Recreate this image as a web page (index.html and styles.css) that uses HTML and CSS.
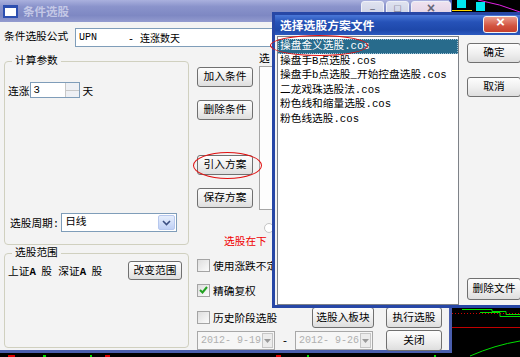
FILE: index.html
```html
<!DOCTYPE html>
<html lang="zh-CN">
<head>
  <meta charset="UTF-8">
  <title>条件选股</title>
  <link rel="stylesheet" href="styles.css">
</head>
<body>

  <div class="desktop">

    <!-- chart of the main program behind the dialogs -->
    <svg class="chart" width="520" height="357" viewBox="0 0 520 357">
      <rect x="0" y="0" width="520" height="357" fill="#000"/>
      <line x1="452" y1="10.5" x2="472" y2="10.5" stroke="#ffd800" stroke-width="1"/>
      <rect x="457" y="0" width="9" height="8" fill="#00e8f0"/>
      <rect x="476" y="2" width="9" height="9" fill="#00e8f0"/>
      <path d="M478 0 Q 500 4 520 12" stroke="#e020e0" fill="none" stroke-width="1"/>
      <line x1="452" y1="307.5" x2="488" y2="307.5" stroke="#d00000"/>
      <path d="M462 309.5 H492 V311.5 H506 V314.5 H520" stroke="#00e000" fill="none"/>
      <path d="M480 312.5 H500 V316.5 H520" stroke="#00e000" fill="none"/>
      <line x1="452" y1="313.5" x2="520" y2="313.5" stroke="#d00000" stroke-dasharray="1 2"/>
      <line x1="452" y1="327.5" x2="520" y2="327.5" stroke="#c00000"/>
      <path d="M470 356 Q 495 345 520 341" stroke="#00e000" fill="none"/>
      <rect x="8" y="355" width="7" height="2" fill="#e00000"/>
      <rect x="43" y="355" width="3" height="2" fill="#00e000"/>
      <rect x="90" y="355" width="2" height="2" fill="#00e000"/>
      <rect x="105" y="355" width="5" height="2" fill="#e00000"/>
      <rect x="276" y="355" width="5" height="2" fill="#e00000"/>
      <rect x="307" y="355" width="2" height="2" fill="#00e000"/>
      <rect x="434" y="355" width="2" height="2" fill="#00e000"/>
    </svg>

    <!-- main dialog -->
    <div class="win main-win">
      <div class="titlebar inactive">
        <span class="win-icon"></span>
        <span class="title">条件选股</span>
        <div class="caption-btns">
          <span class="cb">&#8211;</span>
          <span class="cb">&#9633;</span>
          <span class="cb cb-close">&#215;</span>
        </div>
      </div>

      <div class="main-body">
        <div class="formula-row">
          <span class="formula-label">条件选股公式</span>
          <div class="textbox formula">
            <span class="code">UPN</span><span class="code-desc">- 连涨数天</span>
          </div>
        </div>

        <div class="columns">
          <div class="left-col">
            <fieldset class="group calc">
              <legend>计算参数</legend>
              <div class="spin-row">
                连涨
                <div class="spin">
                  <span class="spin-val">3</span>
                  <span class="spin-btns"><i class="up"></i><i class="down"></i></span>
                </div>
                天
              </div>
              <div class="period-row">
                <span>选股周期:</span>
                <div class="combo">
                  <span class="combo-val">日线</span>
                  <span class="combo-btn">
                    <svg width="9" height="6" viewBox="0 0 9 6"><path d="M1 1 L4.5 4.5 L8 1" stroke="#3b4f82" stroke-width="1.6" fill="none"/></svg>
                  </span>
                </div>
              </div>
            </fieldset>

            <fieldset class="group range">
              <legend>选股范围</legend>
              <div class="range-row">
                <span>上证<b>A</b> 股 深证<b>A</b> 股</span>
                <button class="btn">改变范围</button>
              </div>
            </fieldset>
          </div>

          <div class="right-col">
            <div class="top-part">
              <div class="btn-col">
                <button class="btn first">加入条件</button>
                <button class="btn">删除条件</button>
                <button class="btn import">引入方案</button>
                <button class="btn">保存方案</button>
              </div>
              <div class="desc-area">
                <div class="desc-label">选</div>
                <div class="desc-box"></div>
                <span class="radio"></span>
              </div>
            </div>

            <div class="notice">选股在下</div>

            <div class="check-row row1">
              <span class="check"></span>
              <span>使用涨跌不定</span>
            </div>
            <div class="check-row row2">
              <span class="check checked">
                <svg width="9" height="8" viewBox="0 0 9 8"><path d="M1 4 L3.5 6.5 L8 1" stroke="#21a121" stroke-width="2" fill="none"/></svg>
              </span>
              <span>精确复权</span>
            </div>
            <div class="check-row row3">
              <div class="check-cell">
                <span class="check"></span>
                <span>历史阶段选股</span>
              </div>
              <button class="btn wide">选股入板块</button>
              <button class="btn">执行选股</button>
            </div>
            <div class="check-row row4">
              <div class="date">
                <span class="date-val">2012- 9-19</span>
                <span class="date-btn"><svg width="7" height="4" viewBox="0 0 7 4"><path d="M0 0 H7 L3.5 4 Z" fill="#9a9a9a"/></svg></span>
              </div>
              <span class="dash">-</span>
              <div class="date">
                <span class="date-val">2012- 9-26</span>
                <span class="date-btn"><svg width="7" height="4" viewBox="0 0 7 4"><path d="M0 0 H7 L3.5 4 Z" fill="#9a9a9a"/></svg></span>
              </div>
              <button class="btn close-btn">关闭</button>
            </div>
          </div>
        </div>
      </div>
    </div>

    <!-- file picker dialog -->
    <div class="win pick-win">
      <div class="titlebar active">
        <span class="title">选择选股方案文件</span>
        <span class="close-x">&#215;</span>
      </div>
      <div class="pick-body">
        <ul class="listbox">
          <li class="selected">操盘金义选股.cos</li>
          <li>操盘手B点选股.cos</li>
          <li>操盘手b点选股_开始控盘选股.cos</li>
          <li>二龙戏珠选股法.cos</li>
          <li>粉色线和缩量选股.cos</li>
          <li>粉色线选股.cos</li>
        </ul>
        <div class="pick-btns">
          <button class="btn">确定</button>
          <button class="btn">取消</button>
          <button class="btn del">删除文件</button>
        </div>
      </div>
    </div>

    <!-- red marker rings drawn over the screenshot -->
    <span class="ring ring-import"></span>
    <span class="ring ring-file"></span>

  </div>

</body>
</html>
```

FILE: styles.css
```css
body {
  margin: 0;
  width: 520px;
  height: 357px;
  overflow: hidden;
  background: #000;
  font-family: "Liberation Mono", "Noto Sans CJK SC", monospace;
  font-size: 10.7px;
  color: #000;
}

.desktop {
  position: relative;
  width: 520px;
  height: 357px;
}

.chart {
  position: absolute;
  left: 0;
  top: 0;
}

.win {
  position: absolute;
  box-sizing: border-box;
  background: #f3f3f3;
}

/* ---------- main dialog ---------- */

.main-win {
  left: 0;
  top: 0;
  width: 452px;
  height: 353px;
  border-right: 3px solid #4a5eae;
  border-bottom: 3px solid #4a5eae;
}

.titlebar {
  display: flex;
  align-items: center;
}

.titlebar.inactive {
  height: 22px;
  background: linear-gradient(180deg, #aab1de 0%, #8a93cb 30%, #7e88c3 70%, #939bcf 100%);
}

.win-icon {
  width: 11px;
  height: 8px;
  margin-left: 3px;
  border: 2px solid #2d4fb0;
  border-top-width: 3px;
  background: #fff;
}

.titlebar .title {
  margin-left: 5px;
  font-weight: bold;
  font-size: 11.5px;
}

.inactive .title {
  color: #c4c8e6;
}

.caption-btns {
  display: flex;
  margin-left: auto;
  margin-right: -2px;
  align-self: flex-start;
  margin-top: 1px;
}

.cb {
  width: 21px;
  height: 19px;
  margin-left: 2px;
  border: 1px solid #eef0f8;
  border-radius: 3px;
  background: linear-gradient(#dfe2ef, #c6cbe1);
  color: #667;
  font-size: 11px;
  line-height: 14px;
  text-align: center;
}

.cb-close {
  width: 38px;
  background: linear-gradient(#efe2ef, #dccbe0);
  font-weight: bold;
  font-size: 14px;
}

.main-body {
  padding: 6px 0 0 4px;
}

.formula-row {
  display: flex;
  height: 19px;
}

.formula-label {
  width: 71px;
  line-height: 19px;
}

.textbox {
  box-sizing: border-box;
  border: 1px solid #7f9db9;
  background: #fff;
}

.formula {
  flex: 1;
  display: flex;
  align-items: center;
  font-size: 10px;
}

.code {
  margin-left: 3px;
  width: 49px;
}

.columns {
  display: flex;
  margin-top: 8px;
}

.left-col {
  width: 186px;
}

.group {
  box-sizing: border-box;
  margin: 0;
  padding: 0 3px;
  border: 1px solid #d0d0bf;
  border-radius: 4px;
}

.group legend {
  margin-left: 4px;
  padding: 0 3px;
  line-height: 13px;
}

.calc {
  height: 190px;
}

.range {
  height: 101px;
  margin-top: 2px;
}

.spin-row {
  display: flex;
  align-items: center;
  height: 16px;
  margin-top: 14px;
}

.spin {
  display: flex;
  box-sizing: border-box;
  width: 50px;
  height: 16px;
  margin: 0 2px 0 1px;
  border: 1px solid #7f9db9;
  background: #fff;
}

.spin-val {
  flex: 1;
  padding-left: 2px;
  line-height: 14px;
}

.spin-btns {
  display: flex;
  flex-direction: column;
  width: 14px;
}

.spin-btns i {
  flex: 1;
  border-left: 1px solid #c8c8c8;
  background: #eef0f4;
}

.spin-btns i.up {
  border-bottom: 1px solid #c8c8c8;
}

.period-row {
  display: flex;
  align-items: center;
  height: 19px;
  margin-top: 115px;
  padding-left: 2px;
}

.combo {
  display: flex;
  box-sizing: border-box;
  width: 116px;
  height: 19px;
  margin-left: 2px;
  border: 1px solid #7f9db9;
  background: #fff;
}

.combo-val {
  flex: 1;
  padding-left: 3px;
  line-height: 17px;
}

.combo-btn {
  display: flex;
  align-items: center;
  justify-content: center;
  width: 15px;
  margin: 1px;
  border: 1px solid #b7c8ee;
  border-radius: 2px;
  background: linear-gradient(#e6eefc, #bfd0f5);
}

.range-row {
  display: flex;
  align-items: center;
  justify-content: space-between;
  height: 19px;
  margin-top: 1px;
  padding-right: 3px;
}

.range-row b {
  margin-right: -1px;
}

.btn {
  box-sizing: border-box;
  width: 56px;
  height: 20px;
  padding: 0;
  border: 1px solid #707070;
  border-radius: 3px;
  background: linear-gradient(#fdfdfd, #f0f0f0 50%, #dedede);
  font: inherit;
  color: #000;
  line-height: 18px;
}

.range-row .btn {
  width: 54px;
  height: 19px;
}

.right-col {
  margin-left: 4px;
  flex: 1;
}

.top-part {
  display: flex;
  height: 180px;
}

.btn-col {
  display: flex;
  flex-direction: column;
  margin-left: 4px;
}

.btn-col .btn {
  margin-top: 13px;
}

.btn-col .btn.first {
  margin-top: 12px;
}

.btn-col .btn.import {
  margin-top: 35px;
}

.desc-area {
  margin-left: 6px;
}

.desc-label {
  margin-top: -3px;
  line-height: 14px;
}

.desc-box {
  box-sizing: border-box;
  width: 190px;
  height: 144px;
  border: 1px solid #a5a5a5;
  background: #fdfdfd;
}

.radio {
  display: block;
  box-sizing: border-box;
  width: 10px;
  height: 10px;
  margin: 13px 0 0 5px;
  border: 1px solid #c4c4c4;
  border-radius: 50%;
  background: #fff;
}

.notice {
  margin: 1px 0 0 31px;
  line-height: 13px;
  color: #f00000;
  white-space: nowrap;
}

.check-row {
  display: flex;
  align-items: center;
  margin-left: 4px;
  white-space: nowrap;
}

.check {
  display: flex;
  align-items: center;
  justify-content: center;
  box-sizing: border-box;
  width: 13px;
  height: 13px;
  margin-right: 3px;
  border: 1px solid #a4a4a4;
  background: linear-gradient(135deg, #dedede, #fbfbfb);
}

.row1 {
  height: 14px;
  margin-top: 9px;
}

.row2 {
  height: 14px;
  margin-top: 11px;
}

.row3 {
  height: 21px;
  margin-top: 10px;
}

.check-cell {
  display: flex;
  align-items: center;
  width: 115px;
}

.btn.wide {
  width: 62px;
  height: 21px;
}

.row3 .btn {
  height: 21px;
  margin-left: 12px;
}

.row3 .btn.wide {
  margin-left: 0;
}

.row4 {
  height: 21px;
  margin-top: 2px;
}

.date {
  display: flex;
  box-sizing: border-box;
  width: 78px;
  height: 19px;
  border: 1px solid #a8a8a8;
  background: #f6f6f6;
}

.date-val {
  flex: 1;
  padding-left: 3px;
  line-height: 17px;
  color: #b0b0b0;
  font-size: 10px;
}

.date-btn {
  display: flex;
  align-items: center;
  justify-content: center;
  width: 15px;
  margin: 1px;
  border: 1px solid #c6c6c6;
  background: #ececec;
}

.dash {
  width: 20px;
  text-align: center;
}

.close-btn {
  height: 21px;
  margin-left: 13px;
}

/* ---------- file picker dialog ---------- */

.pick-win {
  left: 272px;
  top: 12px;
  width: 252px;
  height: 296px;
  border: 3px solid #2747a6;
}

.titlebar.active {
  height: 20px;
  background: linear-gradient(180deg, #4a78d8 0%, #2652b8 35%, #1e48aa 75%, #2c5ac0 100%);
}

.active .title {
  margin-left: 5px;
  color: #fff;
  font-size: 11.8px;
}

.close-x {
  box-sizing: border-box;
  width: 35px;
  height: 17px;
  margin: -2px 3px 0 auto;
  border: 1px solid #f4f4f4;
  border-radius: 3px;
  background: linear-gradient(#eb9b8c, #d2533f 60%, #c5402d);
  color: #fff;
  font-size: 15px;
  font-weight: bold;
  line-height: 14px;
  text-align: center;
}

.pick-body {
  display: flex;
  padding: 1px 0 0 2px;
}

.listbox {
  box-sizing: border-box;
  width: 187px;
  height: 269px;
  margin: 0;
  padding: 2px 0 0;
  list-style: none;
  border: 1px solid #7e8288;
  background: #fff;
}

.listbox li {
  padding-left: 2px;
  line-height: 14.5px;
  white-space: nowrap;
}

.listbox li.selected {
  background: #286b8c;
  color: #fff;
  outline: 1px dotted #9fc3d6;
  outline-offset: -1px;
}

.pick-btns {
  display: flex;
  flex-direction: column;
  height: 269px;
  margin-left: 8px;
}

.pick-btns .btn {
  width: 54px;
  height: 20px;
  margin-top: 14px;
}

.pick-btns .btn:first-child {
  margin-top: 7px;
}

.pick-btns .btn.del {
  margin-top: auto;
  margin-bottom: 5px;
  height: 22px;
}

/* ---------- red marker rings ---------- */

.ring {
  position: absolute;
  border: 1px solid #e01010;
  border-radius: 50%;
}

.ring-import {
  left: 193px;
  top: 152px;
  width: 67px;
  height: 25px;
}

.ring-file {
  left: 270px;
  top: 35px;
  width: 96px;
  height: 19px;
}
```
